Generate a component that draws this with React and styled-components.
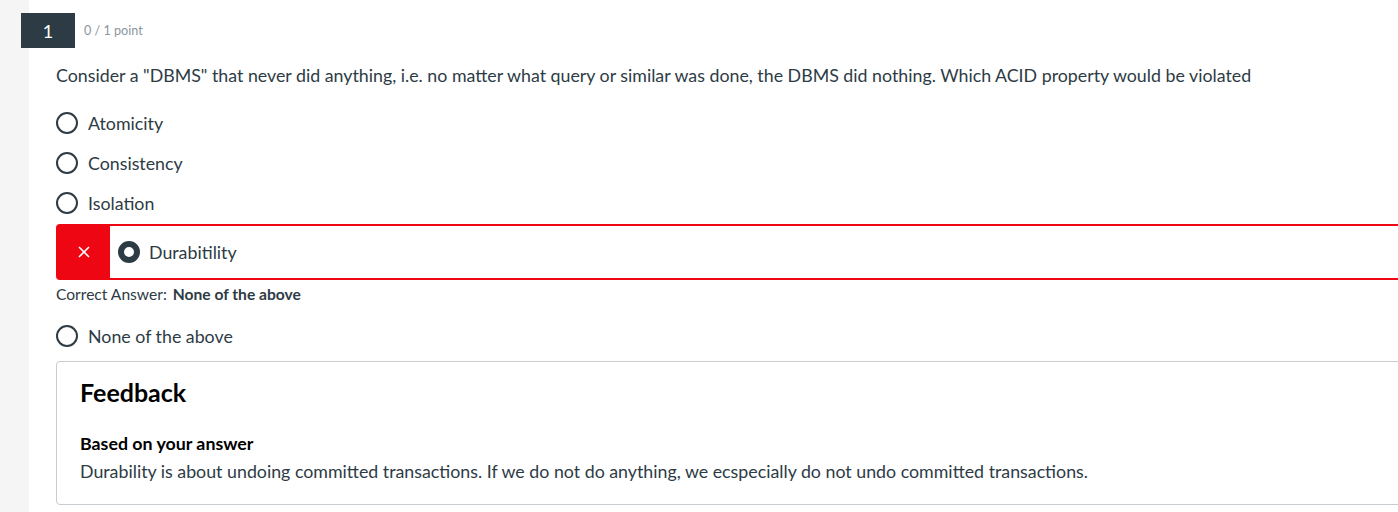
import React from 'react';
import styled, { createGlobalStyle } from 'styled-components';

const GlobalStyle = createGlobalStyle`
  html, body {
    margin: 0;
    padding: 0;
    overflow: hidden;
    background: #f5f5f5;
    font-family: Lato, "Open Sans", sans-serif;
    color: #2d3b45;
  }
`;

const Panel = styled.div`
  margin-left: 29px;
  width: 1440px;
  min-height: 512px;
  background: #fff;
  padding: 13px 0 0 27px;
  box-sizing: border-box;
`;

const Header = styled.div`
  display: flex;
  align-items: center;
  gap: 9px;
  margin-left: -35px;
`;

const NumberBadge = styled.div`
  width: 54px;
  height: 35px;
  background: #2d3b45;
  color: #fff;
  font-size: 18px;
  display: flex;
  align-items: center;
  justify-content: center;
`;

const Points = styled.span`
  font-size: 12.6px;
  color: #8b969e;
`;

const QuestionText = styled.p`
  margin: 15px 0 16px;
  font-size: 17.8px;
  line-height: 24px;
`;

const OptionRow = styled.label`
  display: flex;
  align-items: center;
  height: 40px;
  font-size: 17.8px;
  gap: 10px;
`;

const Radio = styled.span`
  width: 22px;
  height: 22px;
  border-radius: 50%;
  box-sizing: border-box;
  border: ${({ checked }) => (checked ? '6px' : '2px')} solid #2d3b45;
  background: #fff;
  flex-shrink: 0;
`;

const WrongBox = styled.div`
  display: flex;
  align-items: center;
  height: 56px;
  margin-top: 1px;
  border: 2px solid #ee0612;
  border-radius: 4px 0 0 4px;
  box-sizing: border-box;
  gap: 8px;
  font-size: 17.8px;
`;

const WrongMark = styled.div`
  width: 52px;
  align-self: stretch;
  background: #ee0612;
  color: #fff;
  display: flex;
  align-items: center;
  justify-content: center;
`;

const WrongLabel = styled.span`
  display: flex;
  align-items: center;
  gap: 9px;
`;

const CorrectAnswer = styled.div`
  font-size: 15.6px;
  line-height: 20px;
  margin: 4px 0 12px;

  strong {
    font-weight: 700;
    margin-left: 6px;
  }
`;

const FeedbackBox = styled.div`
  margin-top: 5px;
  border: 1px solid #c7cdd1;
  border-radius: 4px;
  padding: 15px 23px 21px;
`;

const FeedbackTitle = styled.h3`
  margin: 0 0 24px;
  font-size: 25px;
  line-height: 30px;
  font-weight: 700;
  color: #000;
`;

const FeedbackLabel = styled.div`
  font-size: 17.8px;
  line-height: 24px;
  font-weight: 700;
  color: #000;
  margin-bottom: 4px;
`;

const FeedbackText = styled.div`
  font-size: 17.8px;
  line-height: 24px;
`;

const CrossIcon = () => (
  <svg width="12" height="12" viewBox="0 0 12 12">
    <path d="M1 1L11 11M11 1L1 11" stroke="#fff" strokeWidth="1.6" />
  </svg>
);

const options = ['Atomicity', 'Consistency', 'Isolation'];

export default function App() {
  return (
    <>
      <GlobalStyle />
      <Panel>
        <Header>
          <NumberBadge>1</NumberBadge>
          <Points>0 / 1 point</Points>
        </Header>
        <QuestionText>
          Consider a "DBMS" that never did anything, i.e. no matter what query or similar was done, the DBMS did nothing. Which ACID property would be violated
        </QuestionText>
        {options.map((o) => (
          <OptionRow key={o}>
            <Radio />
            {o}
          </OptionRow>
        ))}
        <WrongBox>
          <WrongMark>
            <CrossIcon />
          </WrongMark>
          <WrongLabel>
            <Radio checked />
            Durabitility
          </WrongLabel>
        </WrongBox>
        <CorrectAnswer>
          Correct Answer:<strong>None of the above</strong>
        </CorrectAnswer>
        <OptionRow>
          <Radio />
          None of the above
        </OptionRow>
        <FeedbackBox>
          <FeedbackTitle>Feedback</FeedbackTitle>
          <FeedbackLabel>Based on your answer</FeedbackLabel>
          <FeedbackText>
            Durability is about undoing committed transactions. If we do not do anything, we ecspecially do not undo committed transactions.
          </FeedbackText>
        </FeedbackBox>
      </Panel>
    </>
  );
}
